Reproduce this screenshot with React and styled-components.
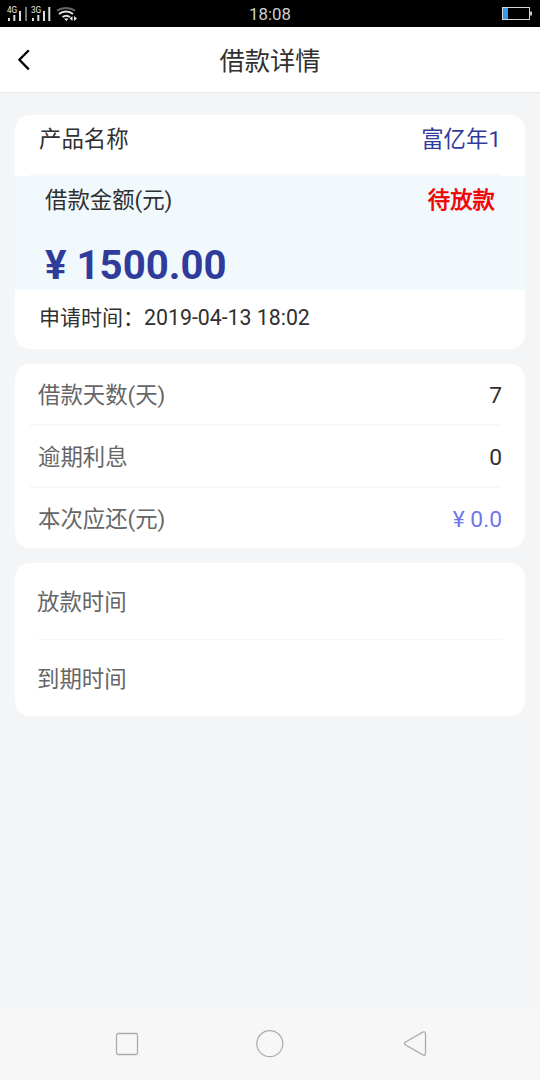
import styled, { createGlobalStyle } from "styled-components";

const details = [
  { label: "借款天数(天)", value: "7" },
  { label: "逾期利息", value: "0" },
  { label: "本次应还(元)", value: "¥ 0.0", color: "#6f76ec" },
];

export default function App() {
  return (
    <Screen>
      <GlobalStyle />
      <StatusBar />
      <Header>
        <BackButton aria-label="返回">
          <svg width="14" height="24" viewBox="0 0 14 24" fill="none" stroke="#000" strokeWidth="2.3">
            <path d="M11.8 2.2L2.4 11.8L11.8 21.4" />
          </svg>
        </BackButton>
        <Title>借款详情</Title>
      </Header>
      <Content>
        <Card>
          <ProductRow>
            <span>产品名称</span>
            <ProductName>富亿年1</ProductName>
          </ProductRow>
          <Divider />
          <AmountBox>
            <AmountTop>
              <span>借款金额(元)</span>
              <Status>待放款</Status>
            </AmountTop>
            <Amount>¥ 1500.00</Amount>
          </AmountBox>
          <ApplyTime>
            <span>申请时间：</span>
            <ApplyDate>2019-04-13 18:02</ApplyDate>
          </ApplyTime>
        </Card>
        <Card>
          {details.map((item) => (
            <DetailRow key={item.label}>
              <span>{item.label}</span>
              <Value color={item.color}>{item.value}</Value>
            </DetailRow>
          ))}
        </Card>
        <Card>
          <DateRow>放款时间</DateRow>
          <DateRow>到期时间</DateRow>
        </Card>
      </Content>
      <NavBar />
    </Screen>
  );
}

function StatusBar() {
  return (
    <Bar>
      <Signals>
        <svg width="90" height="27" viewBox="0 0 90 27">
          <g fill="#e8e8e8" fontFamily="Roboto, sans-serif" fontSize="8.2">
            <text x="7" y="11.7">4G</text>
            <text x="31" y="11.7">3G</text>
          </g>
          <g fill="#dcdcdc">
            <rect x="8" y="17" width="2" height="3" />
            <rect x="13.3" y="14" width="2" height="6" />
            <rect x="19" y="10" width="2" height="10" />
            <rect x="25" y="6" width="2" height="14" fill="#777" />
            <rect x="32" y="17" width="2" height="3" />
            <rect x="37.3" y="14" width="2" height="6" />
            <rect x="43" y="10" width="2" height="10" />
            <rect x="48.3" y="6" width="2" height="14" />
          </g>
          <g fill="none">
            <path d="M57 9.6C62 6 70 6 75 9.6" stroke="#666" strokeWidth="2" />
            <path d="M59 13C63 9.8 69 9.8 73 13" stroke="#e4e4e4" strokeWidth="2" />
            <path d="M62.5 16C65 14.2 67.5 14.2 70 16" stroke="#e4e4e4" strokeWidth="2" />
          </g>
          <path d="M64 17.5H68.5L66.3 20.3ZM69.5 17.5L72.5 15V20ZM74 15L77 17.5L74 20Z" fill="#e4e4e4" />
        </svg>
      </Signals>
      <Clock>18:08</Clock>
      <Battery>
        <svg width="31" height="14" viewBox="0 0 31 14">
          <rect x="0.5" y="0.5" width="27" height="12" fill="none" stroke="#d5d5d5" />
          <rect x="1" y="1" width="5" height="11" fill="#2f9cf4" />
          <rect x="28" y="4.5" width="2" height="4" fill="#c8c8c8" />
        </svg>
      </Battery>
    </Bar>
  );
}

function NavBar() {
  return (
    <Nav>
      <svg width="24" height="28" viewBox="0 0 24 28" fill="none" stroke="#acacac" strokeWidth="1.3">
        <rect x="1.5" y="3.5" width="21" height="21" rx="1.5" />
      </svg>
      <svg width="28" height="28" viewBox="0 0 28 28" fill="none" stroke="#acacac" strokeWidth="1.2">
        <circle cx="12.8" cy="13.7" r="13" />
      </svg>
      <svg width="24" height="28" viewBox="0 0 24 28" fill="none" stroke="#acacac" strokeWidth="1.3">
        <path d="M2.2 12.3L19.8 2.1Q22.5 1 22.5 3.8V23.3Q22.5 26.1 19.8 24.9L2.2 14.7Q0.7 13.5 2.2 12.3Z" />
      </svg>
    </Nav>
  );
}

const GlobalStyle = createGlobalStyle`
  body {
    margin: 0;
    background-color: #f4f5f7;
    font-family: Roboto, "Noto Sans CJK SC", sans-serif;
  }
  * {
    box-sizing: border-box;
  }
  svg {
    display: block;
    overflow: visible;
  }
`;
const Screen = styled.div`
  width: 540px;
  height: 1080px;
  display: flex;
  flex-direction: column;
  background-color: #f4f5f7;
  color: #303030;
  overflow: hidden;
`;
const Bar = styled.div`
  height: 27px;
  display: grid;
  grid-template-columns: 1fr auto 1fr;
  align-items: center;
  background-color: #000;
`;
const Signals = styled.div`
  justify-self: start;
`;
const Clock = styled.div`
  font-size: 16.8px;
  line-height: 27px;
  padding-top: 1px;
  color: #d0d0d0;
`;
const Battery = styled.div`
  justify-self: end;
  padding-right: 7px;
`;
const Header = styled.header`
  height: 66px;
  display: grid;
  grid-template-columns: 60px 1fr 60px;
  align-items: center;
  background-color: #fff;
  border-bottom: 1px solid #e6e8ea;
`;
const BackButton = styled.button`
  border: none;
  background: none;
  padding: 0 0 0 17px;
  justify-self: start;
`;
const Title = styled.h1`
  margin: 0;
  padding-top: 5px;
  font-size: 25.3px;
  font-weight: 400;
  line-height: 36px;
  text-align: center;
`;
const Content = styled.main`
  flex: 1;
  padding: 22px 15px 0;
  display: flex;
  flex-direction: column;
  gap: 15px;
`;
const Card = styled.section`
  background-color: #fff;
  border-radius: 15px;
  overflow: hidden;
  font-size: 22.4px;
`;
const ProductRow = styled.div`
  height: 59px;
  padding: 7px 24px 0 24px;
  display: flex;
  justify-content: space-between;
  line-height: 34px;
`;
const ProductName = styled.span`
  color: #2f3c9c;
`;
const Divider = styled.div`
  height: 2px;
  margin: 0 24px 0 15px;
  background-color: #f7fafb;
`;
const AmountBox = styled.div`
  height: 114px;
  padding: 7px 30px 0 30px;
  background-color: #f1f9fd;
`;
const AmountTop = styled.div`
  display: flex;
  justify-content: space-between;
  line-height: 34px;
`;
const Status = styled.span`
  color: #f00000;
  -webkit-text-stroke: 0.7px #f00000;
`;
const Amount = styled.div`
  margin-top: 24px;
  font-size: 40.2px;
  font-weight: 700;
  line-height: 50px;
  color: #2f3c9c;
`;
const ApplyTime = styled.div`
  height: 59px;
  padding: 11px 24px 0;
  display: flex;
  font-size: 21px;
  line-height: 34px;
`;
const ApplyDate = styled.span`
  font-size: 21.3px;
`;
const DetailRow = styled.div`
  height: 62px;
  margin: 0 24px 0 15px;
  padding: 0 0 2px 8px;
  display: flex;
  justify-content: space-between;
  align-items: center;
  color: #666;
  border-bottom: 2px solid #f7f9f9;
  &:last-child {
    height: 60px;
    border-bottom: none;
  }
`;
const Value = styled.span`
  margin-right: -1px;
  padding-top: 4px;
  font-size: 22.8px;
  color: ${(props) => props.color || "#303030"};
`;
const DateRow = styled.div`
  height: 77px;
  margin: 0 22px;
  padding-bottom: 2px;
  display: flex;
  align-items: center;
  color: #666;
  border-bottom: 1px solid #f6f7f7;
  &:last-child {
    height: 76px;
    border-bottom: none;
  }
`;
const Nav = styled.nav`
  height: 72px;
  padding: 0 113px 0 115px;
  display: flex;
  justify-content: space-between;
  align-items: center;
  background-color: #f7f7f7;
`;
